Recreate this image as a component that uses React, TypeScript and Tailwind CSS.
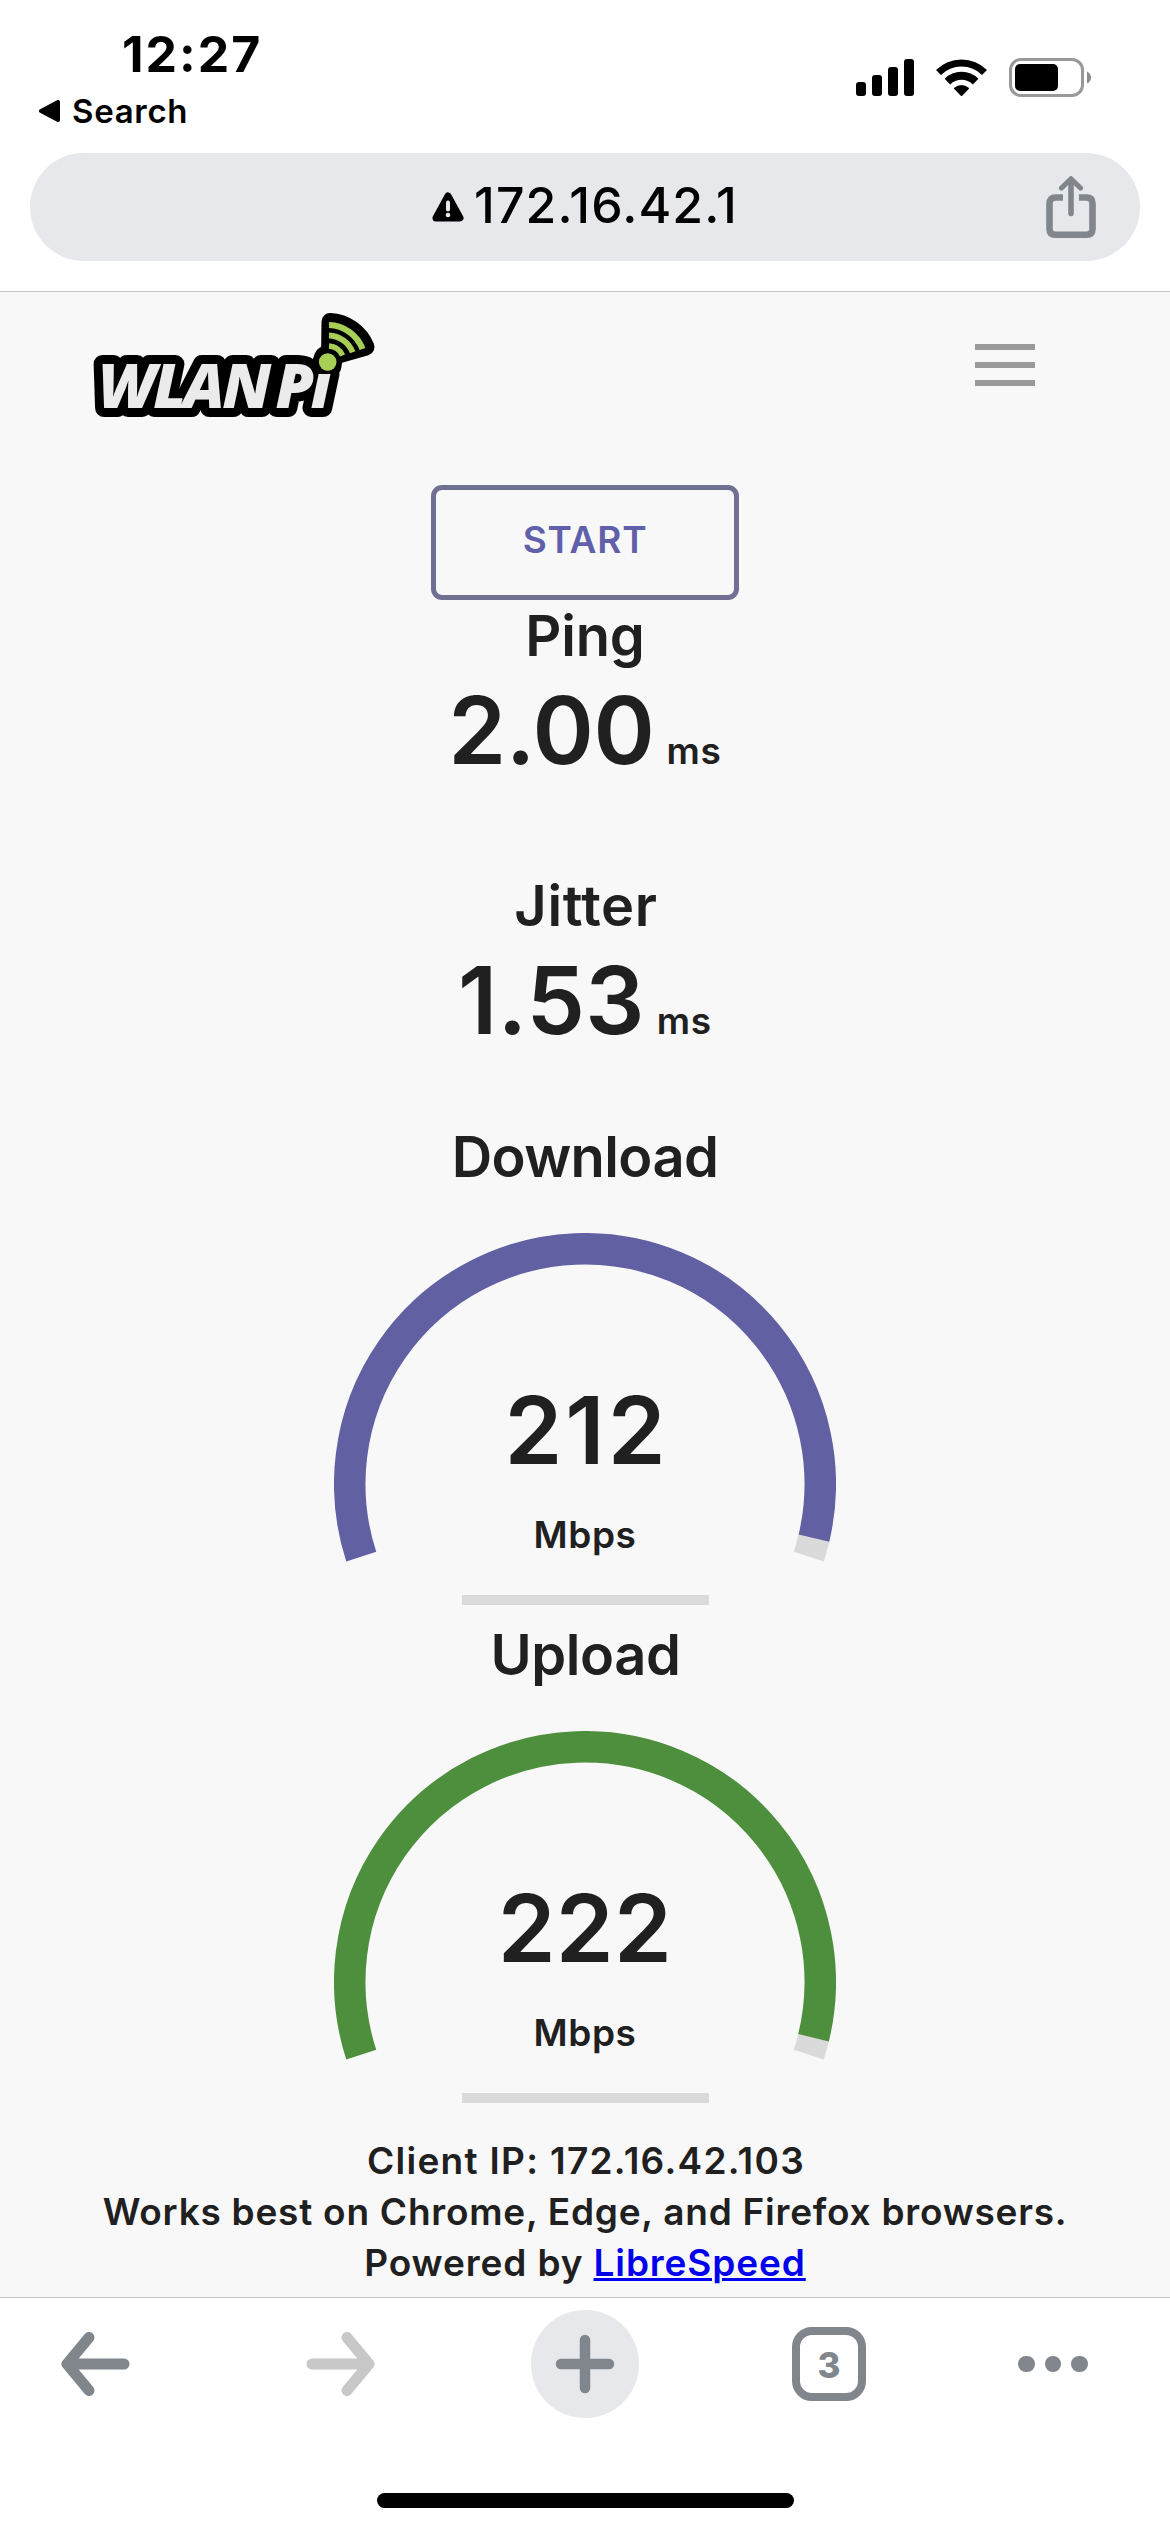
const StatusBar = () => {
    return (
        <div className="flex h-[153px] justify-between">
            <div className="flex flex-col gap-[6px] pt-6">
                <div className="h-[60px] pl-[122px] text-[50px] leading-[60px] font-bold tracking-[2px]">12:27</div>
                <div className="flex h-[42px] items-center gap-3 pl-[39px]">
                    <svg width="21" height="22" viewBox="0 0 21 22">
                        <path d="M2 11L19 2V20Z" fill="#000" stroke="#000" strokeWidth="4" strokeLinejoin="round" />
                    </svg>
                    <span className="text-[33px] leading-[42px] font-semibold tracking-[0.7px]">Search</span>
                </div>
            </div>

            <div className="flex items-start gap-[22px] pt-[58px] pr-[78px]">
                <svg width="58" height="39" viewBox="0 0 58 39">
                    <rect x="0" y="24" width="10" height="14" rx="3" />
                    <rect x="16" y="17" width="10" height="21" rx="3" />
                    <rect x="32" y="9" width="10" height="29" rx="3" />
                    <rect x="48" y="1" width="10" height="37" rx="3" />
                </svg>
                <svg width="51" height="39" viewBox="936.5 58 51 39" fill="none" stroke="#000">
                    <path d="M939 72.5A32.5 32.5 0 0 1 985 72.5" strokeWidth="7" />
                    <path d="M947.9 81.6A20 20 0 0 1 976.1 81.6" strokeWidth="8" />
                    <path d="M962 95L955.5 88.4A10 10 0 0 1 968.5 88.4Z" fill="#000" strokeWidth="2" strokeLinejoin="round" />
                </svg>
                <svg width="83" height="39" viewBox="0 0 83 39">
                    <rect x="1.5" y="1.5" width="72" height="36" rx="10.5" fill="none" stroke="#999" strokeWidth="3" />
                    <rect x="6" y="6" width="43" height="27" rx="5" />
                    <path d="M78 13.5Q82 15.5 82 19.5T78 25.5Z" fill="#8c8c8c" />
                </svg>
            </div>
        </div>
    );
};

const AddressBar = () => {
    return (
        <div className="mx-[30px] flex h-[108px] items-center rounded-full bg-[#e7e8ec]">
            <div className="flex-1 pl-[44px]" />
            <div className="flex items-center gap-[10px]">
                <svg width="32" height="30" viewBox="0 0 32 30">
                    <path d="M16 4L28 26H4Z" fill="#000" stroke="#000" strokeWidth="7" strokeLinejoin="round" />
                    <path d="M16 10.5V17.5" stroke="#e7e8ec" strokeWidth="4" strokeLinecap="round" />
                    <circle cx="16" cy="23" r="2.3" fill="#e7e8ec" />
                </svg>
                <span className="pb-1 text-[50px] leading-[60px] font-[540] tracking-[1.1px]">172.16.42.1</span>
            </div>
            <div className="flex flex-1 justify-end pr-[44px]">
                <svg width="50" height="62" viewBox="0 0 50 62" fill="none" stroke="#80868b">
                    <path d="M17 21.5H9.5Q3.5 21.5 3.5 27.5V53Q3.5 58.7 9.5 58.7H40.5Q46.5 58.7 46.5 53V27.5Q46.5 21.5 40.5 21.5H33" strokeWidth="6.6" />
                    <path d="M25 4V37.5" strokeWidth="5.6" strokeLinecap="round" />
                    <path d="M15.5 12L25 2.8L34.5 12" strokeWidth="5.2" strokeLinecap="round" strokeLinejoin="round" />
                </svg>
            </div>
        </div>
    );
};

const Logo = () => {
    return (
        <svg width="290" height="120" viewBox="90 305 290 120">
            <g
                className="font-['Open_Sans',sans-serif] text-[62px] font-extrabold italic"
                fill="#ebebeb"
                stroke="#000"
                strokeWidth="18"
                strokeLinejoin="round"
                paintOrder="stroke"
            >
                <text x="98" y="408" letterSpacing="-2.8">WLAN</text>
                <text x="275.5" y="408" letterSpacing="-3.5">Pi</text>
            </g>
            {/* antenna over the i */}
            <path d="M329.5 357L330 321.5A41 41 0 0 1 366 347L338 355Z" fill="#000" stroke="#000" strokeWidth="17" strokeLinejoin="round" />
            <circle cx="328" cy="359.5" r="14.5" fill="#000" />
            <circle cx="327.7" cy="362" r="8.8" fill="#a8cf55" />
            <g fill="none" stroke="#a8cf55">
                <path d="M329 325A37 37 0 0 1 362.5 349" strokeWidth="6.2" />
                <path d="M329 335.5A26.5 26.5 0 0 1 352.7 352.3" strokeWidth="5.8" />
                <path d="M329 346A16 16 0 0 1 342.6 355.5" strokeWidth="5.4" />
            </g>
        </svg>
    );
};

const PageHeader = () => {
    return (
        <div className="flex h-[193px] items-start justify-between pl-[90px] pr-[135px]">
            <div className="pt-[13px]">
                <Logo />
            </div>
            <button className="flex w-[60px] flex-col gap-3 pt-[52px]">
                <span className="h-[6px] bg-[#999]" />
                <span className="h-[6px] bg-[#999]" />
                <span className="h-[6px] bg-[#999]" />
            </button>
        </div>
    );
};

const Title = ({ text, className }: { text: string; className: string }) => (
    <h3 className={`h-[72px] text-center text-[56px] leading-[72px] ${className}`}>{text}</h3>
);

const Latency = ({ value, className }: { value: string; className: string }) => {
    return (
        <div className="flex h-[116px] items-baseline justify-center gap-3">
            <span className={`text-[93px] leading-[116px] ${className}`}>{value}</span>
            <span className="text-[37px] tracking-[0.8px]">ms</span>
        </div>
    );
};

type GaugeProps = {
    value: string;
    color: string;
    end: number;
    className: string;
};

// point on the centre line of the dial, degrees clockwise from three o'clock
const point = (deg: number) => {
    const a = (deg * Math.PI) / 180;
    return `${251 + 235.25 * Math.cos(a)} ${251 + 235.25 * Math.sin(a)}`;
};

const Gauge = ({ value, color, end, className }: GaugeProps) => {
    return (
        <div className="flex flex-col items-center">
            <div className="grid h-[362px] w-[502px]">
                <svg className="[grid-area:1/1]" width="502" height="362" viewBox="0 0 502 362" fill="none" strokeWidth="31.5">
                    <path d={`M${point(end - 0.2)}A235.25 235.25 0 0 1 ${point(18)}`} stroke="#dadada" />
                    <path d={`M${point(162)}A235.25 235.25 0 1 1 ${point(end)}`} stroke={color} />
                </svg>
                <div className="flex flex-col items-center pt-[139px] [grid-area:1/1]">
                    <span className={`h-[116px] text-[93px] leading-[116px] ${className}`}>{value}</span>
                    <span className="mt-[21px] h-[51px] text-[37px] leading-[51px] tracking-[0.6px]">Mbps</span>
                </div>
            </div>
            <div className="h-[10px] w-[247px] bg-[#dadada]" />
        </div>
    );
};

const Toolbar = () => {
    return (
        <div className="h-[235px] border-t border-[#c4c4c6] bg-white">
            <div className="flex h-[132px] items-center">
                <svg className="ml-[61px]" width="69" height="64" viewBox="0 0 69 64" fill="none" stroke="#80868b" strokeWidth="11" strokeLinecap="round" strokeLinejoin="round">
                    <path d="M63 32H6.5M28 5.5L6 32L28 58.5" />
                </svg>
                <svg className="ml-[176px]" width="69" height="64" viewBox="0 0 69 64" fill="none" stroke="#c8c8c8" strokeWidth="11" strokeLinecap="round" strokeLinejoin="round">
                    <path d="M6 32H62.5M41 5.5L63 32L41 58.5" />
                </svg>
                <button className="ml-[156px] flex size-[108px] items-center justify-center rounded-full bg-[#e7e8ec]">
                    <svg width="60" height="60" viewBox="0 0 60 60" stroke="#80868b" strokeWidth="10.5" strokeLinecap="round">
                        <path d="M30 6V54M6 30H54" />
                    </svg>
                </button>
                <button className="ml-[153px] flex size-[74px] items-center justify-center rounded-[20px] border-8 border-[#80868b] pt-[2px] text-[35px] leading-none font-extrabold text-[#80868b]">
                    3
                </button>
                <div className="ml-[152px] flex gap-[10px]">
                    <span className="size-[16.5px] rounded-full bg-[#80868b]" />
                    <span className="size-[16.5px] rounded-full bg-[#80868b]" />
                    <span className="size-[16.5px] rounded-full bg-[#80868b]" />
                </div>
            </div>
            <div className="mx-auto mt-[63px] h-[15px] w-[417px] rounded-full bg-black" />
        </div>
    );
};

export default function App() {
    return (
        <div className="flex h-[2532px] w-[1170px] flex-col overflow-hidden bg-white font-['Inter',sans-serif] text-black">
            <div className="h-[292px] border-b border-[#c4c4c6]">
                <StatusBar />
                <AddressBar />
            </div>

            <div className="h-[2005px] bg-[#f8f8f8] font-[560] text-[#202020]">
                <PageHeader />
                <button className="mx-auto flex h-[115px] w-[308px] items-center justify-center rounded-[11px] border-5 border-[#707092] pb-[6px] text-[37px] tracking-[0.8px] text-[#6060aa]">
                    START
                </button>

                <Title text="Ping" className="tracking-[-0.2px]" />
                <Latency value="2.00" className="tracking-[-0.4px]" />

                <div className="mt-[82px]">
                    <Title text="Jitter" className="pl-[2px] tracking-[0.6px]" />
                    <Latency value="1.53" className="tracking-[0.2px]" />
                </div>

                <div className="mt-[63px]">
                    <Title text="Download" className="mb-10 tracking-[-0.6px]" />
                    <Gauge value="212" color="#6060a3" end={13.3} className="pl-[3px] tracking-[3px]" />
                </div>

                <div className="mt-[14px]">
                    <Title text="Upload" className="mb-10 pl-px tracking-[-0.4px]" />
                    <Gauge value="222" color="#4e8f3d" end={13.7} className="tracking-[0.3px]" />
                </div>

                <div className="mt-8 text-center text-[37px] leading-[51px]">
                    <p className="pl-[2px] tracking-[1.3px]">Client IP: 172.16.42.103</p>
                    <p className="tracking-[0.76px]">Works best on Chrome, Edge, and Firefox browsers.</p>
                    <p className="tracking-[0.88px]">
                        Powered by <a className="text-[#0000ee] underline decoration-[3px]">LibreSpeed</a>
                    </p>
                </div>
            </div>

            <Toolbar />
        </div>
    );
}
